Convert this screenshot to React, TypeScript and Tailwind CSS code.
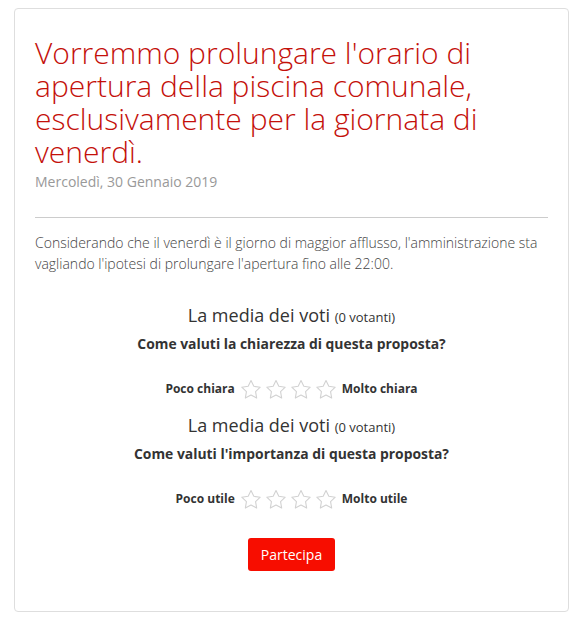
import React from 'react';

const font = { fontFamily: '"Open Sans", "Liberation Sans", sans-serif' };

function Star() {
    return (
        <svg width="22" height="21" viewBox="0 0 24 23" className="block">
            <path
                d="M12 1.6l3.1 6.4 7 1-5.1 4.9 1.2 7L12 17.6l-6.2 3.3 1.2-7L1.9 9l7-1z"
                fill="#fff"
                stroke="#d2d2d2"
                strokeWidth="1.2"
                strokeLinejoin="round"
            />
        </svg>
    );
}

function Rating({ question, low, high }: { question: string; low: string; high: string }) {
    return (
        <div className="flex flex-col items-center">
            <p className="text-[18px] leading-[24px] text-[#333]">
                La media dei voti <span className="text-[13px]">(0 votanti)</span>
            </p>
            <p className="mt-[5px] text-[13.9px] leading-[20px] font-bold text-[#333]">{question}</p>
            <div className="mt-[23px] flex items-center h-[24px] gap-[5px]">
                <span className="text-[12px] font-bold text-[#333]">{low}</span>
                <div className="flex gap-[3px]">
                    {[0, 1, 2, 3].map((i) => (
                        <Star key={i} />
                    ))}
                </div>
                <span className="text-[12px] font-bold text-[#333]">{high}</span>
            </div>
        </div>
    );
}

export default function App() {
    return (
        <div className="bg-white w-[577px] h-[622px] pt-2 pl-[14px]" style={font}>
            <div className="border border-[#dedede] rounded-[4px] w-[555px] h-[604px] px-5 pt-[27px]">
                <h1 className="text-[30px] leading-[33px] font-light text-[#c4100a] pr-6">
                    Vorremmo prolungare l'orario di apertura della piscina comunale, esclusivamente per la giornata di venerdì.
                </h1>
                <p className="mt-[4px] text-[14px] leading-[20px] text-[#999]">Mercoledì, 30 Gennaio 2019</p>
                <hr className="mt-[25px] border-t border-[#ccc]" />
                <p className="mt-[14px] text-[14px] leading-[21px] font-light text-[#444]">
                    Considerando che il venerdì è il giorno di maggior afflusso, l'amministrazione sta vagliando l'ipotesi di prolungare l'apertura fino alle 22:00.
                </p>
                <div className="mt-[29px]">
                    <Rating question="Come valuti la chiarezza di questa proposta?" low="Poco chiara" high="Molto chiara" />
                </div>
                <div className="mt-[12px]">
                    <Rating question="Come valuti l'importanza di questa proposta?" low="Poco utile" high="Molto utile" />
                </div>
                <div className="mt-[27px] flex justify-center">
                    <button
                        type="button"
                        className="h-[33px] w-[87px] rounded-[3px] bg-[#f70d00] text-white text-[14px]"
                    >
                        Partecipa
                    </button>
                </div>
            </div>
        </div>
    );
}
